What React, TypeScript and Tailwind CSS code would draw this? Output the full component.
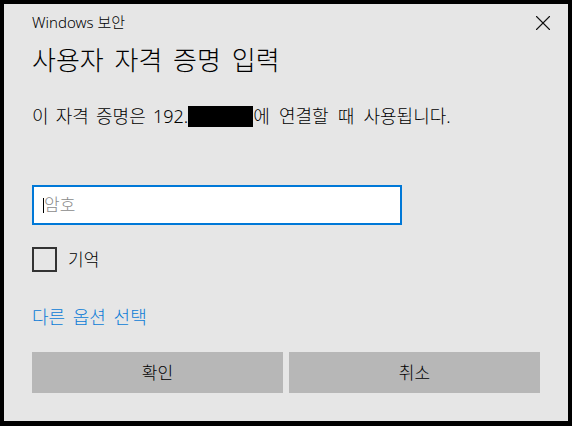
import { X } from "lucide-react";

const font = {
  fontFamily: '"Segoe UI", "Noto Sans", "Noto Sans CJK KR", sans-serif',
};

export default function App() {
  return (
    <div className="w-[572px] h-[426px] bg-black pt-[4px] pl-[4px] pr-[4px] pb-[5px]" style={font}>
      <div className="h-full bg-[#e6e6e6] flex flex-col text-black font-light">
        {/* title bar */}
        <div className="flex items-start justify-between h-[36px] pl-[28px] pr-[12px]">
          <span className="text-[15px] leading-[20px] mt-[8px]">Windows 보안</span>
          <button className="mt-[6px] text-[#111]">
            <X size={26} strokeWidth={1} />
          </button>
        </div>

        <div className="px-[28px] flex flex-col">
          <h1 className="text-[26px] leading-[32px] mt-[4px] [word-spacing:4px]">사용자 자격 증명 입력</h1>

          <p className="text-[18px] leading-[24px] mt-[28px] flex items-center [word-spacing:2.5px] whitespace-pre">
            <span>이 자격 증명은 192.</span>
            <span className="inline-block w-[65px] h-[21px] bg-black" />
            <span className="[word-spacing:4.5px]">에 연결할 때 사용됩니다.</span>
          </p>

          <div className="mt-[57px] w-[370px] h-[40px] border-2 border-[#0078d7] bg-white flex items-center pl-[9px]">
            <span className="w-px h-[15px] bg-black" />
            <span className="text-[17px] text-[#8a8a8a] leading-[20px]">암호</span>
          </div>

          <label className="mt-[22px] flex items-center gap-[11px]">
            <span className="w-[25px] h-[25px] border-2 border-[#333] bg-[#e6e6e6]" />
            <span className="text-[17px] leading-[24px]">기억</span>
          </label>

          <a className="mt-[33px] text-[18px] leading-[24px] text-[#0a7bd6] [word-spacing:3px]">다른 옵션 선택</a>

          <div className="mt-[23px] flex gap-[6px]">
            <button className="w-[251px] h-[41px] bg-[#b7b7b7] text-[17px]">확인</button>
            <button className="w-[251px] h-[41px] bg-[#b7b7b7] text-[17px]">취소</button>
          </div>
        </div>
      </div>
    </div>
  );
}
